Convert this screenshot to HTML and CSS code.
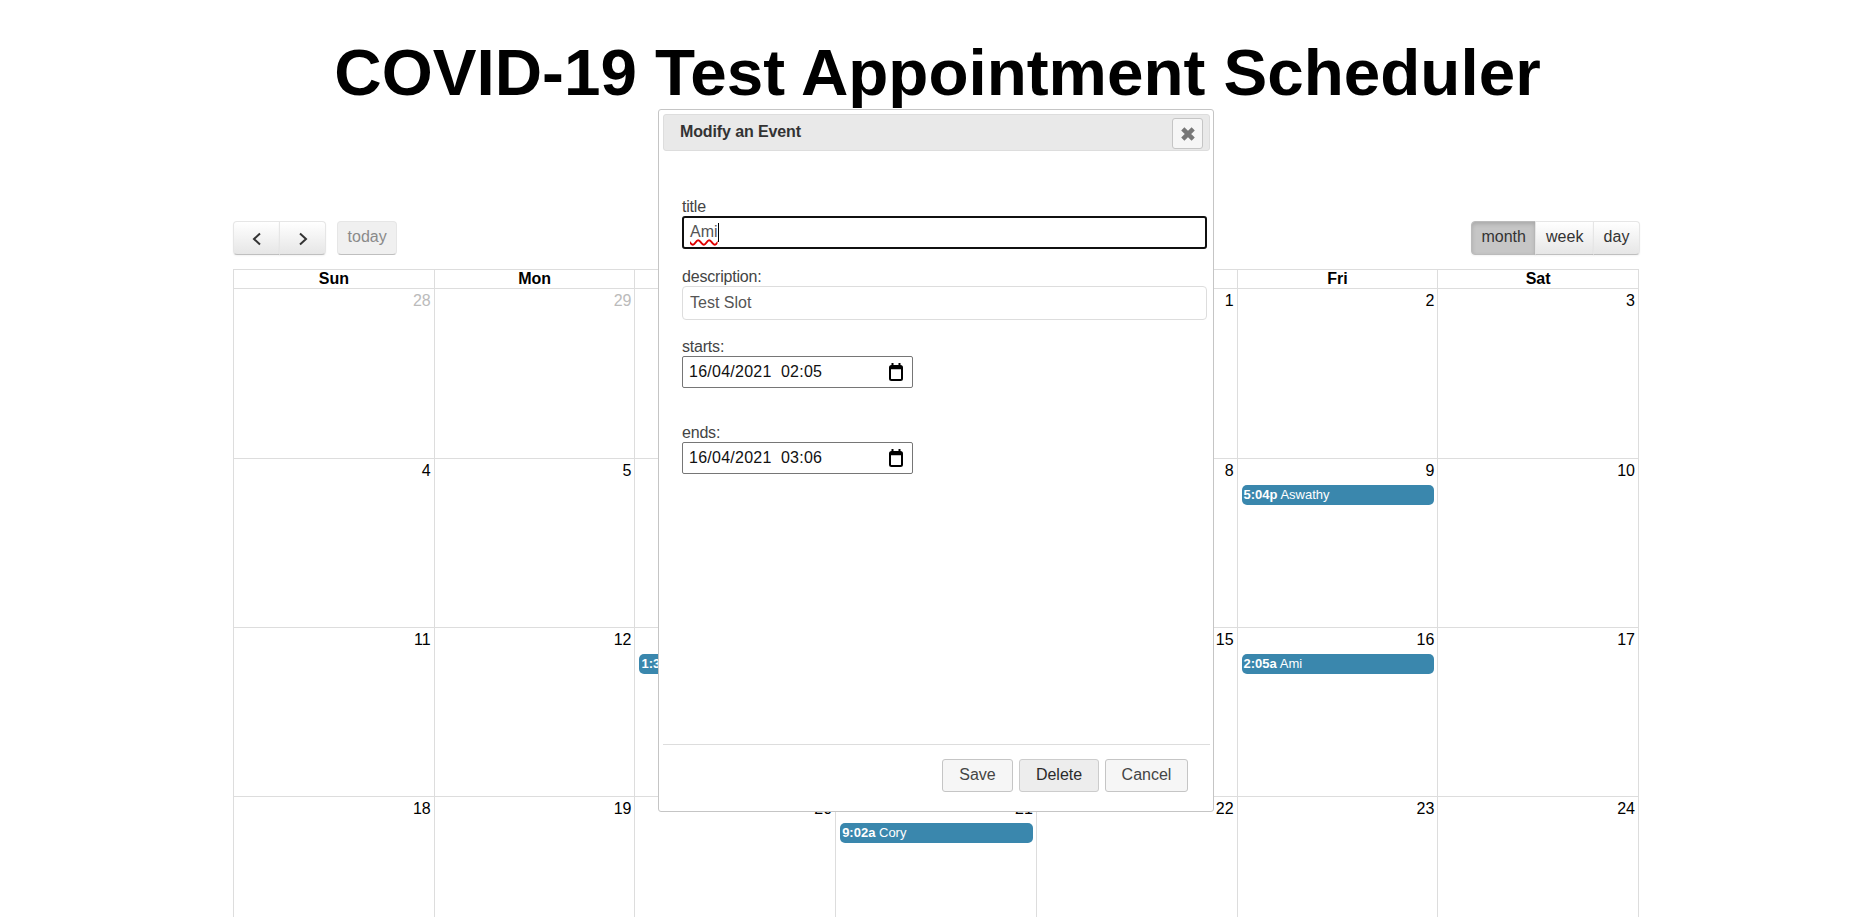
FILE: index.html
```html
<!DOCTYPE html>
<html lang="en">
<head>
  <meta charset="UTF-8" />
  <title>COVID-19 Test Appointment Scheduler</title>
  <link rel="stylesheet" href="styles.css">
</head>
<body>
  <h1 class="page-title">COVID-19 Test Appointment Scheduler</h1>

  <div class="calendar">
    <div class="toolbar">
      <div class="toolbar-left">
        <div class="btn-group">
          <button class="cal-btn nav-btn">
            <svg width="12" height="14" viewBox="0 0 12 14"><path d="M9 1.500 3 7l6 5.500" fill="none" stroke="#333" stroke-width="2"/></svg>
          </button>
          <button class="cal-btn nav-btn">
            <svg width="12" height="14" viewBox="0 0 12 14"><path d="M3 1.500 9 7l-6 5.500" fill="none" stroke="#333" stroke-width="2"/></svg>
          </button>
        </div>
        <button class="cal-btn cal-btn-disabled">today</button>
      </div>
      <div class="btn-group view-switch">
        <button class="cal-btn cal-btn-active">month</button>
        <button class="cal-btn">week</button>
        <button class="cal-btn">day</button>
      </div>
    </div>

    <div class="month-grid">
      <div class="day-head">Sun</div>
      <div class="day-head">Mon</div>
      <div class="day-head">Tue</div>
      <div class="day-head">Wed</div>
      <div class="day-head">Thu</div>
      <div class="day-head">Fri</div>
      <div class="day-head">Sat</div>

      <div class="day other-month"><div class="day-num">28</div></div>
      <div class="day other-month"><div class="day-num">29</div></div>
      <div class="day other-month"><div class="day-num">30</div></div>
      <div class="day other-month"><div class="day-num">31</div></div>
      <div class="day"><div class="day-num">1</div></div>
      <div class="day"><div class="day-num">2</div></div>
      <div class="day"><div class="day-num">3</div></div>

      <div class="day"><div class="day-num">4</div></div>
      <div class="day"><div class="day-num">5</div></div>
      <div class="day"><div class="day-num">6</div></div>
      <div class="day"><div class="day-num">7</div></div>
      <div class="day"><div class="day-num">8</div></div>
      <div class="day">
        <div class="day-num">9</div>
        <div class="event"><b>5:04p</b> Aswathy</div>
      </div>
      <div class="day"><div class="day-num">10</div></div>

      <div class="day"><div class="day-num">11</div></div>
      <div class="day"><div class="day-num">12</div></div>
      <div class="day">
        <div class="day-num">13</div>
        <div class="event"><b>1:30p</b></div>
      </div>
      <div class="day"><div class="day-num">14</div></div>
      <div class="day"><div class="day-num">15</div></div>
      <div class="day">
        <div class="day-num">16</div>
        <div class="event"><b>2:05a</b> Ami</div>
      </div>
      <div class="day"><div class="day-num">17</div></div>

      <div class="day"><div class="day-num">18</div></div>
      <div class="day"><div class="day-num">19</div></div>
      <div class="day"><div class="day-num">20</div></div>
      <div class="day">
        <div class="day-num">21</div>
        <div class="event"><b>9:02a</b> Cory</div>
      </div>
      <div class="day"><div class="day-num">22</div></div>
      <div class="day"><div class="day-num">23</div></div>
      <div class="day"><div class="day-num">24</div></div>
    </div>
  </div>

  <!-- Event dialog -->
  <div class="dialog">
    <div class="dialog-head">
      <span class="dialog-title">Modify an Event</span>
      <button class="dialog-close">
        <svg width="16" height="16" viewBox="0 0 16 16"><path d="M2.800 2.800l10.400 10.400M13.200 2.800 2.800 13.200" fill="none" stroke="#777" stroke-width="4.500"/></svg>
      </button>
    </div>
    <div class="dialog-body">
      <label class="field-label">title</label>
      <div class="text-field text-field-focus"><span class="misspelled">Ami</span><span class="caret"></span></div>

      <label class="field-label">description:</label>
      <div class="text-field">Test Slot</div>

      <label class="field-label">starts:</label>
      <div class="date-field">
        <span>16/04/2021  02:05</span>
        <svg width="16" height="18" viewBox="0 0 16 18"><path d="M4.500 0v3M11.500 0v3" stroke="#000" stroke-width="2"/><rect x="2" y="3" width="12" height="14" rx="1.500" fill="none" stroke="#000" stroke-width="2"/><path d="M2 5h12" stroke="#000" stroke-width="2.500"/></svg>
      </div>

      <label class="field-label field-label-gap">ends:</label>
      <div class="date-field">
        <span>16/04/2021  03:06</span>
        <svg width="16" height="18" viewBox="0 0 16 18"><path d="M4.500 0v3M11.500 0v3" stroke="#000" stroke-width="2"/><rect x="2" y="3" width="12" height="14" rx="1.500" fill="none" stroke="#000" stroke-width="2"/><path d="M2 5h12" stroke="#000" stroke-width="2.500"/></svg>
      </div>
    </div>
    <div class="dialog-foot">
      <button class="dialog-btn btn-save">Save</button>
      <button class="dialog-btn btn-delete">Delete</button>
      <button class="dialog-btn btn-cancel">Cancel</button>
    </div>
  </div>
</body>
</html>
```

FILE: styles.css
```css
html, body {
  height: 100%;
  overflow: hidden;
}
body {
  margin: 0;
  background: #fff;
  color: #000;
  font-family: "Liberation Sans", Arial, sans-serif;
  font-size: 16px;
}
.page-title {
  margin: 0;
  padding-top: 36px;
  height: 185px;
  box-sizing: border-box;
  text-align: center;
  font-size: 65.6px;
  line-height: 74px;
  font-weight: bold;
}

/* Calendar */
.calendar {
  width: 1406px;
  margin-left: 233px;
}
.toolbar {
  display: flex;
  justify-content: space-between;
  align-items: flex-start;
  margin: 36px 0 14px;
  height: 34px;
}
.toolbar-left {
  display: flex;
  gap: 11px;
}
.btn-group {
  display: flex;
}
.view-switch {
  margin-right: -1px;
}
.cal-btn {
  height: 34px;
  padding: 0 9.6px 2px;
  border: 1px solid;
  border-color: #e6e6e6 #e6e6e6 #bfbfbf;
  background: linear-gradient(#fff, #e6e6e6);
  box-shadow: inset 0 1px 0 rgba(255,255,255,.2), 0 1px 2px rgba(0,0,0,.05);
  color: #333;
  font: inherit;
  border-radius: 0;
}
.btn-group .cal-btn + .cal-btn {
  margin-left: -1px;
}
.btn-group .cal-btn:first-child {
  border-radius: 4px 0 0 4px;
}
.btn-group .cal-btn:last-child {
  border-radius: 0 4px 4px 0;
}
.nav-btn {
  width: 47px;
  padding: 0;
}
.nav-btn svg {
  display: block;
  margin: 2px auto 0;
}
.toolbar-left > .cal-btn-disabled {
  border-radius: 4px;
  background: #f0f0f0;
  color: #8a8a8a;
  box-shadow: none;
}
.btn-group .cal-btn-active {
  background: #c6c6c6;
  border-color: #bbb;
  box-shadow: inset 0 2px 4px rgba(0,0,0,.15), 0 1px 2px rgba(0,0,0,.05);
}
.month-grid {
  display: grid;
  grid-template-columns: repeat(7, 1fr);
  grid-template-rows: 19px 170px;
  grid-auto-rows: 169px;
  border-right: 1px solid #ddd;
  border-top: 1px solid #ddd;
}
.day-head {
  border-left: 1px solid #ddd;
  border-bottom: 1px solid #ddd;
  text-align: center;
  font-weight: bold;
  line-height: 18px;
}
.day {
  border-left: 1px solid #ddd;
  border-bottom: 1px solid #ddd;
  min-width: 0;
}
.day-num {
  padding: 3px 3px 0 0;
  line-height: 18px;
  text-align: right;
}
.other-month .day-num {
  color: #bbb;
}
.event {
  margin: 4.6px 3px 0 4px;
  padding: 0 2px;
  height: 20.5px;
  background: #3a87ad;
  border-radius: 5px;
  color: #fff;
  font-size: 13px;
  line-height: 20px;
  white-space: nowrap;
  overflow: hidden;
}

/* Event dialog */
.dialog {
  position: absolute;
  left: 658px;
  top: 109px;
  width: 556px;
  height: 703px;
  box-sizing: border-box;
  padding: 4px 3px 4px 4px;
  display: flex;
  flex-direction: column;
  background: #fff;
  border: 1px solid #c5c5c5;
  border-radius: 3px;
  color: #333;
}
.dialog-head {
  flex: none;
  display: flex;
  justify-content: space-between;
  align-items: center;
  height: 37px;
  box-sizing: border-box;
  padding: 0 6px 0 16px;
  background: #e9e9e9;
  border: 1px solid #ddd;
  border-radius: 3px;
}
.dialog-title {
  font-weight: bold;
  letter-spacing: -.12px;
  margin-bottom: 2px;
}
.dialog-close {
  width: 31px;
  height: 31px;
  padding: 0;
  margin-top: 2px;
  display: flex;
  align-items: center;
  justify-content: center;
  background: #f6f6f6;
  border: 1px solid #c5c5c5;
  border-radius: 3px;
}
.dialog-body {
  flex: 1;
  padding: 47px 3px 0 19px;
  display: flex;
  flex-direction: column;
  align-items: flex-start;
}
.field-label {
  line-height: 18px;
  color: #444;
  letter-spacing: -.2px;
}
.text-field {
  width: 100%;
  height: 34px;
  box-sizing: border-box;
  margin-bottom: 18px;
  padding: 0 7px;
  border: 1px solid #ddd;
  border-radius: 4px;
  line-height: 32px;
  color: #555;
  display: flex;
  align-items: center;
}
.text-field-focus {
  height: 33px;
  margin-bottom: 19px;
  border: 2px solid #101010;
  border-radius: 3px;
  padding: 0 6px 1px;
}
.misspelled {
  text-decoration: underline wavy #e00000 1.5px;
  text-underline-offset: 2px;
}
.caret {
  width: 1.5px;
  height: 19px;
  background: #000;
}
.date-field {
  width: 231px;
  height: 32px;
  box-sizing: border-box;
  padding: 0 8px 0 6px;
  border: 1px solid #767676;
  border-radius: 2px;
  display: flex;
  justify-content: space-between;
  align-items: center;
  color: #111;
  letter-spacing: .25px;
  white-space: pre;
}
.field-label-gap {
  margin-top: 36px;
}
.dialog-foot {
  flex: none;
  height: 63px;
  box-sizing: border-box;
  padding: 14px 22px 0 0;
  border-top: 1px solid #ddd;
  display: flex;
  justify-content: flex-end;
  gap: 6px;
}
.dialog-btn {
  height: 33px;
  padding: 0 0 2px;
  background: #f6f6f6;
  border: 1px solid #c5c5c5;
  border-radius: 3px;
  color: #454545;
  font: inherit;
}
.btn-save {
  width: 71px;
}
.btn-delete {
  width: 80px;
  background: #ededed;
  color: #2b2b2b;
  border-color: #ccc;
}
.btn-cancel {
  width: 83px;
}
```
